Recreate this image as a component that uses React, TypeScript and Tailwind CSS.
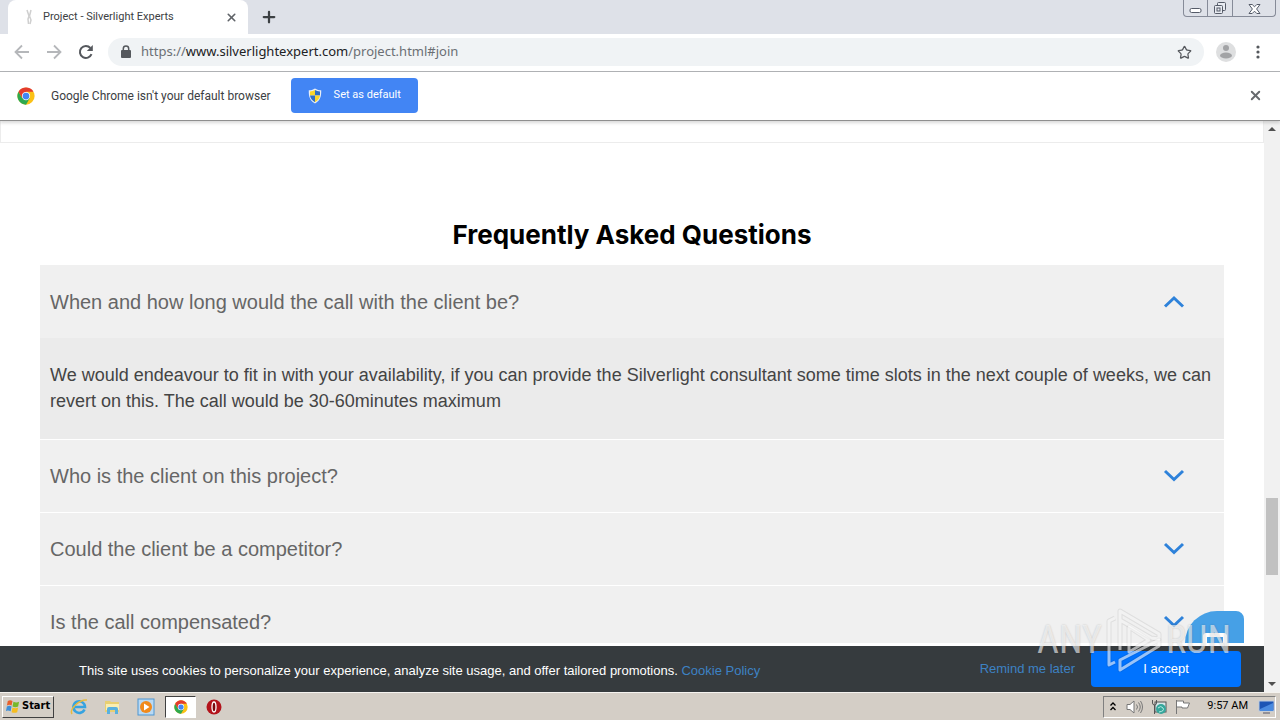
import React, { useState } from 'react';
import { Plus, Star, X } from 'lucide-react';

const uiFont = "font-['Roboto',sans-serif]";

const faqs = [
  {
    question: 'When and how long would the call with the client be?',
    answer:
      'We would endeavour to fit in with your availability, if you can provide the Silverlight consultant some time slots in the next couple of weeks, we can revert on this. The call would be 30-60minutes maximum',
  },
  { question: 'Who is the client on this project?', answer: 'The client name is shared once the call is confirmed.' },
  { question: 'Could the client be a competitor?', answer: 'No, conflicts are checked before every project.' },
  { question: 'Is the call compensated?', answer: 'Yes, at your agreed hourly rate.' },
];

const ChromeLogo: React.FC<{ size: number }> = ({ size }) => (
  <svg width={size} height={size} viewBox="0 0 48 48" aria-hidden="true">
    <circle cx="24" cy="24" r="23" fill="#fbc116" />
    <path d="M4.1 12.5A23 23 0 0 0 24 47l10-17.3L24 24 14 29.7Z" fill="#2da94f" />
    <path d="M4.1 12.5A23 23 0 0 1 43.9 12.5H24L14 29.7Z" fill="#e33b2e" />
    <circle cx="24" cy="24" r="11" fill="#fff" />
    <circle cx="24" cy="24" r="9" fill="#4285f4" />
  </svg>
);

const ShieldIcon = () => (
  <svg width="14" height="16" viewBox="0 0 14 16" aria-hidden="true">
    <path d="M7 .5C5 1.8 3 2.3.8 2.3.6 8 1.5 12.500 7 15.500 12.500 12.500 13.400 8 13.200 2.300 11 2.300 9 1.800 7 .5Z" fill="#e8eef5" />
    <path d="M7 2v5.500H2V3.500C4 3.400 5.500 2.900 7 2Z" fill="#fcd628" />
    <path d="M7 2v5.500h5V3.500C10 3.400 8.500 2.900 7 2Z" fill="#2f6fc4" />
    <path d="M7 7.500v6.700C4 12.500 2.400 10.500 2 7.500Z" fill="#2f6fc4" />
    <path d="M7 7.500v6.700c3-1.700 4.600-3.700 5-6.700Z" fill="#fcd628" />
  </svg>
);

const Chevron: React.FC<{ up: boolean }> = ({ up }) => (
  <svg width="22" height="14" viewBox="0 0 22 14" fill="none" stroke="#2e82da" strokeWidth="3" aria-hidden="true">
    <path d={up ? 'M2 11.500 11 3l9 8.500' : 'M2 2 11 10.500l9-8.500'} />
  </svg>
);

const TabStrip = () => (
  <div className="flex h-[34px] items-start justify-between bg-[#dee1e8] pl-2">
    <div className="flex h-full items-center">
      <div className="flex h-full w-60 items-center rounded-t-lg bg-white pr-2.5 pl-3.5">
        <svg width="15" height="16" viewBox="0 0 15 16" fill="none" stroke="#cfcfcf" strokeWidth="1.500" aria-hidden="true">
          <path d="M5 1l2 6M9 1 7.500 7M7 7l-1 3 .5 5M7.500 7l1.500 4-1 4" />
        </svg>
        <span className="ml-1.5 flex-1 truncate text-[11px] text-[#3c4043]">Project - Silverlight Experts</span>
        <button aria-label="Close tab">
          <X size={13} strokeWidth={3} className="text-[#5f6368]" />
        </button>
      </div>
      <button aria-label="New tab" className="ml-3">
        <Plus size={18} strokeWidth={3} className="text-[#3c4043]" />
      </button>
    </div>
    <div className="mr-1 flex h-[17px] divide-x divide-[#868b98] rounded-b border-x border-b border-[#868b98]">
      <button aria-label="Minimize" className="flex w-6 items-center justify-center">
        <svg width="13" height="17" viewBox="0 0 13 17" fill="#fff" stroke="#555b68" aria-hidden="true">
          <rect x="1" y="8.500" width="11" height="4" rx="1.500" />
        </svg>
      </button>
      <button aria-label="Restore" className="flex w-[25px] items-center justify-center">
        <svg width="14" height="16" viewBox="0 0 14 16" fill="#e8ebf1" stroke="#555b68" aria-hidden="true">
          <rect x="4.500" y="2.500" width="8" height="8" rx="1" />
          <rect x="1.500" y="5.500" width="8" height="8" rx="1" />
          <rect x="4" y="8" width="3" height="3" />
        </svg>
      </button>
      <button aria-label="Close window" className="flex w-[42px] items-center justify-center">
        <svg width="13" height="15" viewBox="0 0 13 15" fill="#fff" stroke="#555b68" aria-hidden="true">
          <path d="M1 3.500h3.200l2.300 2.300 2.300-2.300H12L8.600 8l3.400 4.500H8.800L6.500 10.200 4.200 12.500H1L4.400 8Z" />
        </svg>
      </button>
    </div>
  </div>
);

const Toolbar = () => (
  <div className="flex h-[38px] items-center border-b border-[#b1b3b6] bg-white pr-3.5 pb-px">
    <div className="flex w-[108px] items-center gap-4 pl-3.5">
      <button aria-label="Back">
        <svg width="16" height="16" viewBox="0 0 16 16" fill="none" stroke="#b5b7ba" strokeWidth="1.800" aria-hidden="true">
          <path d="M15 8H2M8 1.500 1.500 8 8 14.500" />
        </svg>
      </button>
      <button aria-label="Forward">
        <svg width="16" height="16" viewBox="0 0 16 16" fill="none" stroke="#b5b7ba" strokeWidth="1.800" aria-hidden="true">
          <path d="M1 8h13M8 1.500 14.500 8 8 14.500" />
        </svg>
      </button>
      <button aria-label="Reload">
        <svg width="16" height="16" viewBox="0 0 16 16" fill="none" stroke="#55585d" strokeWidth="2" aria-hidden="true">
          <path d="M13.500 10.200A6 6 0 1 1 12.400 4" />
          <path d="M14.800 1v6H8.800Z" fill="#55585d" stroke="none" />
        </svg>
      </button>
    </div>
    <div className="flex h-7 flex-1 items-center rounded-full bg-[#f0f3f5] px-3">
      <svg width="12" height="14" viewBox="0 0 12 14" aria-hidden="true">
        <rect x="1" y="5" width="10" height="8" rx="1" fill="#55585d" />
        <path d="M3.300 5.500V3.800a2.700 2.700 0 0 1 5.400 0v1.700" fill="none" stroke="#55585d" strokeWidth="1.500" />
      </svg>
      <div className="ml-[9px] flex-1 font-['Noto_Sans',sans-serif] text-[13px] text-[#6b6f74]" role="textbox" aria-label="Address">
        https://<span className="text-[#202124]">www.silverlightexpert.com</span>/project.html#join
      </div>
      <button aria-label="Bookmark this page">
        <Star size={15} strokeWidth={2} className="text-[#55585d]" />
      </button>
    </div>
    <button aria-label="Profile" className="ml-3">
      <svg width="20" height="20" viewBox="0 0 20 20" aria-hidden="true">
        <circle cx="10" cy="10" r="10" fill="#dedfe0" />
        <circle cx="10" cy="6" r="3" fill="#a2a3a5" />
        <ellipse cx="10" cy="13.500" rx="6" ry="3" fill="#a2a3a5" />
      </svg>
    </button>
    <button aria-label="Menu" className="ml-3.5 flex w-4 justify-center">
      <svg width="4" height="14" viewBox="0 0 4 14" fill="#55585d" aria-hidden="true">
        <circle cx="2" cy="2" r="1.600" />
        <circle cx="2" cy="7" r="1.600" />
        <circle cx="2" cy="12" r="1.600" />
      </svg>
    </button>
  </div>
);

const DefaultBrowserBar = () => (
  <div className="z-10 flex h-[49px] items-center border-b border-[#8f8f8f] bg-white px-[17px] pb-px shadow-[0_2px_3px_rgba(0,0,0,0.15)]">
    <ChromeLogo size={18} />
    <span className="ml-4 text-xs text-[#3c4043]">Google Chrome isn't your default browser</span>
    <button className="ml-5 flex h-[35px] w-[127px] items-center rounded bg-[#4285f4] pl-[17px] text-[11px] text-white">
      <ShieldIcon />
      <span className="ml-3">Set as default</span>
    </button>
    <button aria-label="Dismiss" className="ml-auto">
      <X size={15} strokeWidth={3} className="text-[#66696d]" />
    </button>
  </div>
);

const Faq = () => {
  const [open, setOpen] = useState(0);

  return (
    <section className="px-10">
      <h2 className="pt-[74px] pb-3 text-center font-['Inter',sans-serif] text-[26px] leading-9 font-bold text-black">
        Frequently Asked Questions
      </h2>
      <div>
        {faqs.map((faq, i) => (
          <div key={faq.question} className="border-t border-white bg-[#f0f0f0] first:border-[#f0f0f0]">
            <button
              onClick={() => setOpen(open === i ? -1 : i)}
              aria-expanded={open === i}
              className="flex h-[72px] w-full items-center justify-between pr-[39px] pl-2.5 text-left text-xl text-[#666]"
            >
              {faq.question}
              <Chevron up={open === i} />
            </button>
            {open === i && (
              <p className="bg-[#ebebeb] px-2.5 pt-6 pb-[25px] text-lg leading-[26px] text-[#444]">{faq.answer}</p>
            )}
          </div>
        ))}
      </div>
    </section>
  );
};

const CookieBar = () => (
  <div className="flex h-[46px] shrink-0 items-center bg-[#363b3e] pr-[23px] pl-[79px] text-[13px] text-white">
    <p className="pt-1">
      This site uses cookies to personalize your experience, analyze site usage, and offer tailored promotions.{' '}
      <a href="#policy" className="text-[#3d82c4]">Cookie Policy</a>
    </p>
    <button className="ml-auto text-[#3d82c4]">Remind me later</button>
    <button className="ml-4 h-9 w-[150px] rounded-sm bg-[#0073ff]">I accept</button>
  </div>
);

const Watermark = () => (
  <div className="pointer-events-none absolute right-[33px] bottom-5 flex items-center gap-1 font-['Roboto_Condensed','Roboto',sans-serif] text-[38px] leading-none text-white/60 text-shadow-[0_0_2px_rgba(0,0,0,0.2)]">
    <span>ANY</span>
    <svg width="56" height="64" viewBox="0 0 56 64" fill="none" strokeLinejoin="round" aria-hidden="true">
      <g stroke="#000" strokeOpacity=".07" strokeWidth="5">
        <path d="M9 10 3 13v44l6-3M14 42V3l39 23v5l-8-1-31-18" />
        <path d="M23 19v25l20-12ZM14 52v10l39-24v-6Z" />
      </g>
      <g stroke="#fff" strokeOpacity=".6" strokeWidth="3">
        <path d="M9 10 3 13v44l6-3M14 42V3l39 23v5l-8-1-31-18" />
        <path d="M23 19v25l20-12ZM14 52v10l39-24v-6Z" />
      </g>
    </svg>
    <span>RUN</span>
  </div>
);

const ScrollBar = () => (
  <div className="flex w-4 shrink-0 flex-col items-center justify-between bg-[#f1f1f1] py-1.5">
    <svg width="8" height="4" viewBox="0 0 8 4" aria-hidden="true"><path d="M0 4 4 0l4 4Z" fill="#505050" /></svg>
    <div className="flex w-full flex-1 flex-col justify-end px-0.5 pb-[107px]">
      <div className="h-[77px] bg-[#c1c1c1]" />
    </div>
    <svg width="8" height="4" viewBox="0 0 8 4" aria-hidden="true"><path d="M0 0l4 4 4-4Z" fill="#505050" /></svg>
  </div>
);

const TaskBar = () => (
  <footer className="flex h-7 shrink-0 items-center border-t border-[#f5f3ef] bg-[#d4cec6] pr-1 pl-0.5 text-[11px] text-black">
    <button className="flex h-[22px] w-[52px] items-center gap-0.5 border border-t-white border-r-[#404040] border-b-[#404040] border-l-white pl-0.5 font-['DejaVu_Sans_Condensed','DejaVu_Sans',sans-serif] font-bold">
      <svg width="15" height="15" viewBox="0 0 16 16" aria-hidden="true">
        <path d="M3 2c2-1 3-1 5 0L7 7C5 6 4 6 2 7Z" fill="#e8602c" />
        <path d="M9 3c2 1 4 1 6 0l-1 5c-2 1-4 1-6 0Z" fill="#77b82a" />
        <path d="M2 8c2-1 3-1 5 0l-1 5c-2-1-4-1-5 0Z" fill="#3f8fd8" />
        <path d="M8 9c2 1 4 1 6 0l-1 5c-2 1-4 1-6 0Z" fill="#f6bd20" />
      </svg>
      Start
    </button>
    <div className="ml-4 flex items-center">
      <button aria-label="Internet Explorer">
        <svg width="18" height="18" viewBox="0 0 18 18" fill="none" aria-hidden="true">
          <path d="M14.500 11.500A5.800 5.800 0 1 1 15 9H5" stroke="#36a3e0" strokeWidth="2.600" />
          <path d="M2 16C-1 11 10 1 17 2" stroke="#e8bb3c" strokeWidth="1.500" />
        </svg>
      </button>
      <button aria-label="Explorer" className="ml-4">
        <svg width="17" height="17" viewBox="0 0 17 17" aria-hidden="true">
          <path d="M1 3h5l1 1h8v10H1Z" fill="#e8cf72" />
          <path d="M2 6h13v6H2Z" fill="#f9eeb2" />
          <path d="M3 16v-5q0-2 2-2h7q2 0 2 2v5h-3v-4H6v4Z" fill="#59b1df" />
        </svg>
      </button>
      <button aria-label="Media Player" className="ml-4">
        <svg width="18" height="18" viewBox="0 0 18 18" aria-hidden="true">
          <rect x="1" y="1" width="16" height="16" fill="#b9d9f3" stroke="#4d96d2" />
          <circle cx="9" cy="9" r="6" fill="#f18a1c" />
          <path d="M7 5.500v7L12.500 9Z" fill="#fff" />
        </svg>
      </button>
      <button aria-label="Chrome" className="ml-2.5 flex h-[22px] w-[31px] items-center justify-center border border-t-[#404040] border-r-white border-b-white border-l-[#404040] bg-white">
        <ChromeLogo size={14} />
      </button>
      <button aria-label="Opera" className="ml-2.5">
        <svg width="16" height="16" viewBox="0 0 16 16" aria-hidden="true">
          <circle cx="8" cy="8" r="7.500" fill="#b3131b" />
          <ellipse cx="8" cy="8" rx="2" ry="5" fill="#7b080d" stroke="#fff" strokeWidth="1.300" />
        </svg>
      </button>
    </div>
    <div className="ml-auto flex h-[22px] items-center border border-t-[#808080] border-r-white border-b-white border-l-[#808080] pl-1.5">
      <svg width="6" height="9" viewBox="0 0 6 9" fill="none" stroke="#000" strokeWidth="1.300" aria-hidden="true">
        <path d="M.5 3.500 3 1l2.500 2.500M.5 8 3 5.500 5.500 8" />
      </svg>
      <svg width="17" height="16" viewBox="0 0 17 16" fill="#fff" stroke="#777" className="ml-2.5" aria-hidden="true">
        <path d="M1 5.500h3L8 2v12L4 10.500H1Z" />
        <path d="M10.500 5.500q2 2.500 0 5M12.500 3.500q3.500 4.500 0 9M14.500 2q4 6 0 12" fill="none" />
      </svg>
      <svg width="16" height="16" viewBox="0 0 16 16" className="ml-2" aria-hidden="true">
        <rect x="4" y="3" width="11" height="10" fill="#d7e7e9" stroke="#555" />
        <path d="M1.500 1v3q0 2 2 2t2-2V1M3.500 6v9" fill="none" stroke="#555" />
        <circle cx="10" cy="10" r="5" fill="#35a69b" />
        <path d="M7 9q3-3 5 0t-4 4" fill="none" stroke="#b8ece4" />
      </svg>
      <svg width="16" height="16" viewBox="0 0 16 16" fill="#fff" stroke="#777" className="ml-2" aria-hidden="true">
        <path d="M1.500 1v14M1.500 2h7v2h6l-2 5H7V8H1.500" />
      </svg>
      <span className="ml-4">9:57 AM</span>
      <svg width="17" height="14" viewBox="0 0 17 14" className="ml-2.5" aria-hidden="true">
        <rect x="1" y="1" width="15" height="10" fill="#1c55b5" stroke="#bccbe0" />
        <path d="M2 9 15 3v8H2Z" fill="#4a8be0" />
        <path d="M5 13h7" stroke="#556" />
      </svg>
    </div>
  </footer>
);

const App: React.FC = () => (
  <div className={`flex h-screen flex-col overflow-hidden bg-white ${uiFont}`}>
    <header className="flex shrink-0 flex-col">
      <TabStrip />
      <Toolbar />
      <DefaultBrowserBar />
    </header>
    <div className="flex min-h-0 flex-1">
      <main className="relative flex min-w-0 flex-1 flex-col font-['Liberation_Sans',sans-serif]">
        <div className="min-h-0 flex-1 overflow-hidden">
          <div className="h-[22px] border-x border-b border-[#ececec]" />
          <Faq />
        </div>
        <div className="h-[3px] shrink-0 bg-white" />
        <CookieBar />
        <button aria-label="Open chat" className="absolute right-5 bottom-[49px] flex h-8 w-[59px] items-end justify-center rounded-tl-[32px] rounded-tr-lg bg-[#46a0e6]">
          <span className="h-2.5 w-6 rounded-t border-4 border-b-0 border-white" />
        </button>
        <Watermark />
      </main>
      <ScrollBar />
    </div>
    <TaskBar />
  </div>
);

export default App;
